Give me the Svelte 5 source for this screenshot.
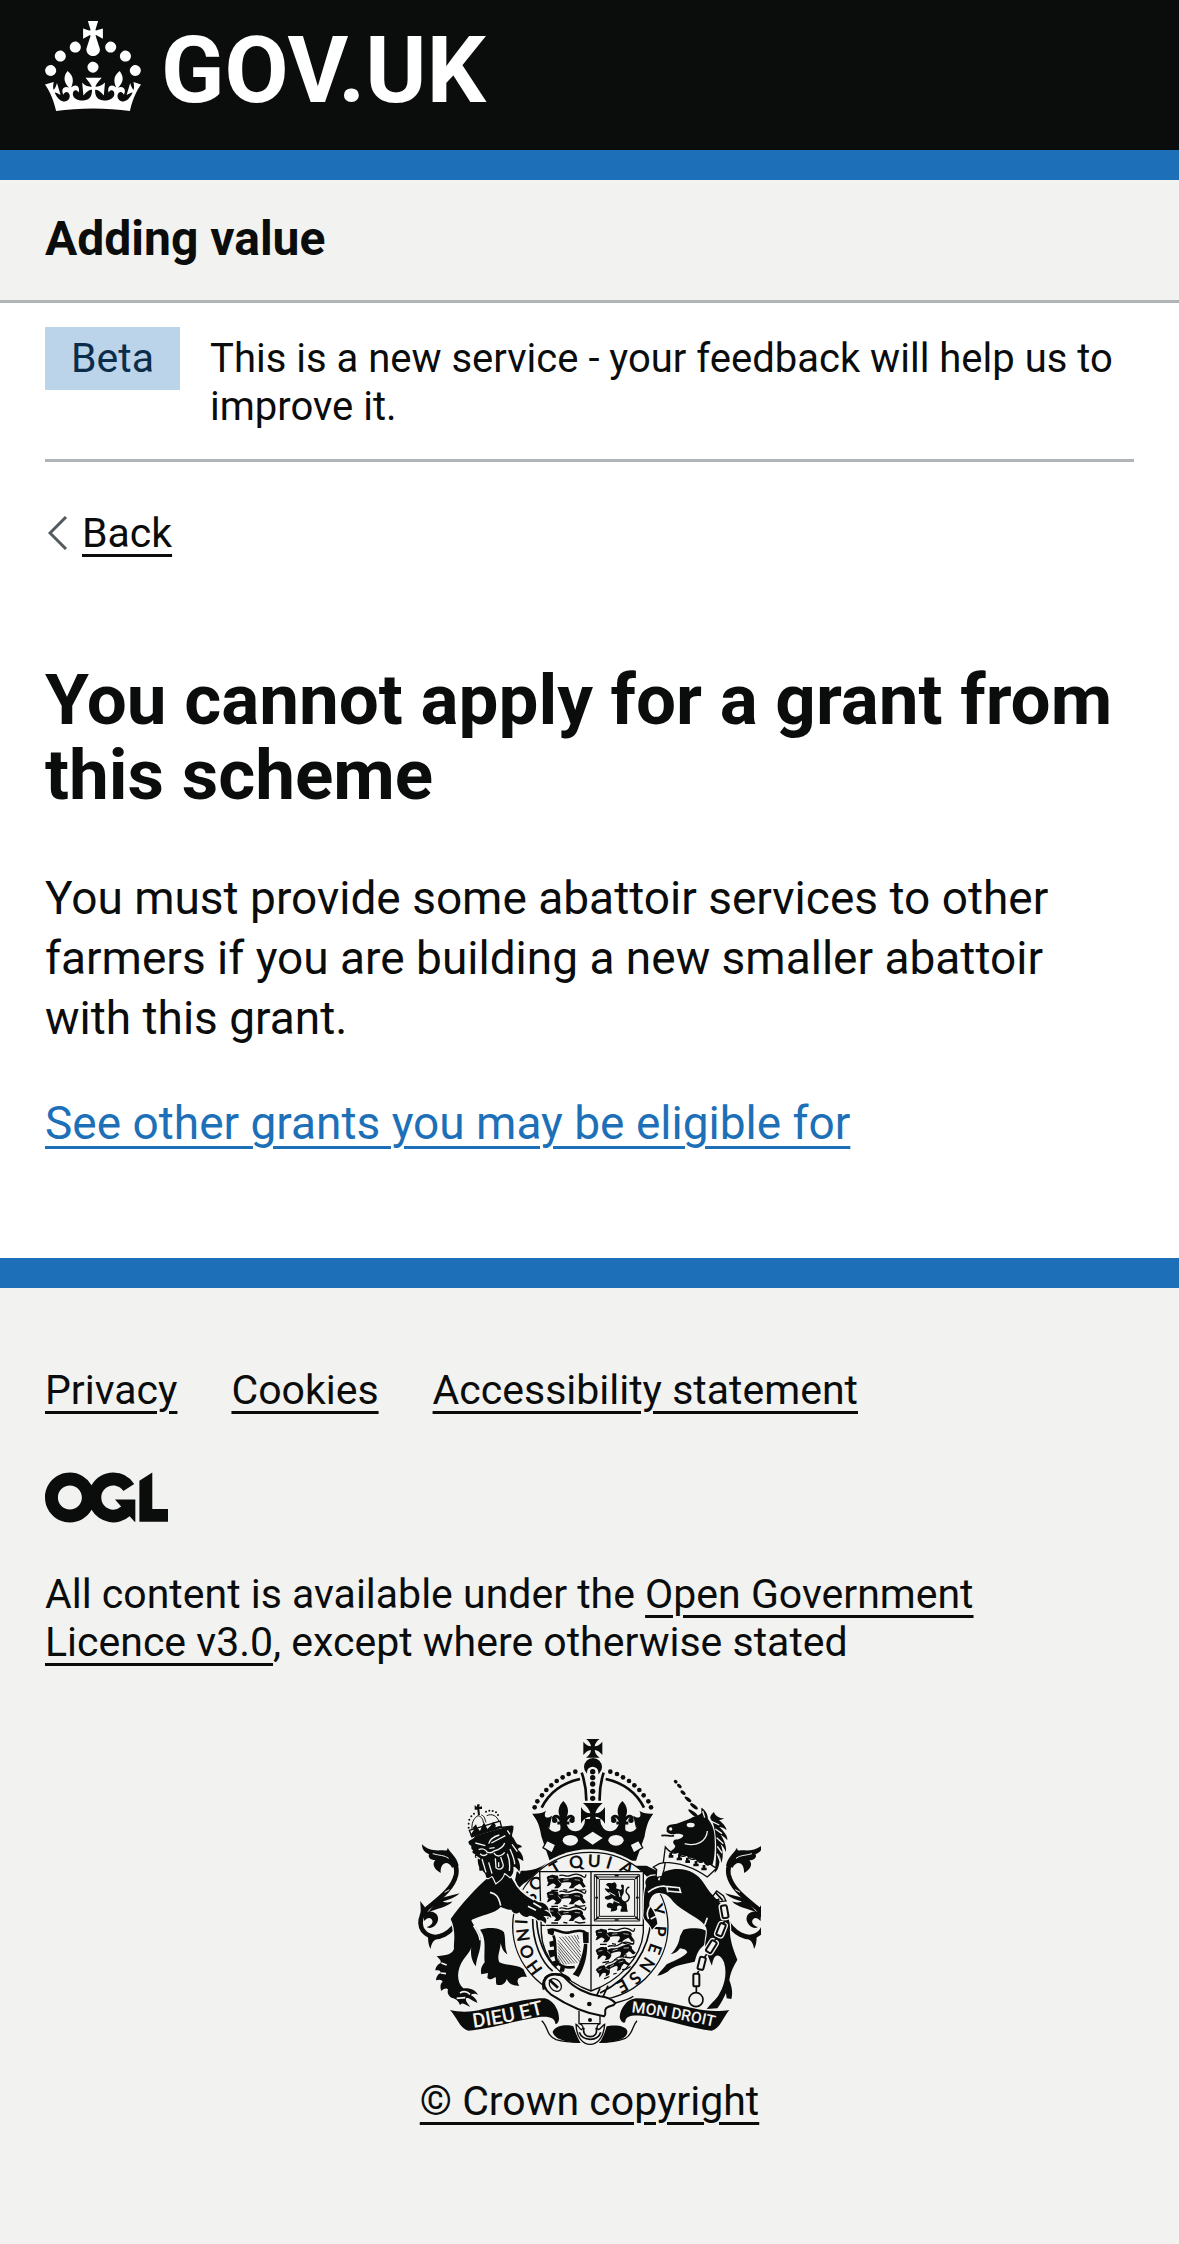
<script>
  const footerLinks = ['Privacy', 'Cookies', 'Accessibility statement'];

  const archPearls = [
    [404, 265], [412, 247], [426, 229], [439, 213], [454, 199],
    [470, 186], [488, 175], [506, 165], [526, 158],
  ];
  const centrePearls = [158, 176, 195, 217, 238];
  const smallPearls = [
    [206, 326], [206, 314], [208, 302], [214, 292], [222, 284],
    [258, 278], [268, 275], [278, 276], [288, 280], [294, 288],
  ];
  const hornTwists = [
    [827, 188, 6], [838, 201, 8], [849, 221, 9], [864, 241, 12], [882, 262, 14], [880, 283, 19],
  ];
  const chainLinks = [
    [974, 578, 80], [963, 632, 112], [934, 683, 122], [905, 733, 104], [889, 783, 90],
  ];
  const harpStrings = [0, 1, 2, 3, 4, 5, 6];

  // Motto letters stand upright from the centre of the garter.
  const centre = [571, 622];
  const motto = [
    ['H', 402, 746], ['O', 380, 698], ['N', 368, 648], ['I', 363, 608],
    ['S', 390, 533], ['O', 408, 492], ['T', 466, 446],
    ['Q', 528, 428], ['U', 583, 425], ['I', 628, 430], ['A', 682, 446],
    ['Y', 774, 572], ['P', 780, 636], ['E', 766, 690], ['N', 742, 738], ['S', 706, 778], ['E', 668, 802],
  ].map(([letter, x, y]) => ({
    letter, x, y,
    turn: Math.round((Math.atan2(x - centre[0], centre[1] - y) * 180) / Math.PI),
  }));
</script>

<header class="masthead">
  <div class="container">
    <a class="logo" href="#home" aria-label="GOV.UK">
      <svg class="crown" viewBox="0 0 32 30" aria-hidden="true">
        <path d="M22.6 10.4c-1 .4-2-.1-2.4-1-.4-.9.1-2 1-2.4.9-.4 2 .1 2.4 1s-.1 2-1 2.4m-5.9 6.7c-.9.4-2-.1-2.4-1-.4-.9.1-2 1-2.4.9-.4 2 .1 2.4 1s-.1 2-1 2.4m10.8-3.7c-1 .4-2-.1-2.4-1-.4-.9.1-2 1-2.4.9-.4 2 .1 2.4 1s0 2-1 2.4m3.3 4.8c-1 .4-2-.1-2.4-1-.4-.9.1-2 1-2.4.9-.4 2 .1 2.4 1s-.1 2-1 2.4M17 4.7l2.3 1.2V2.5l-2.3.7-.2-.2.9-3h-3.4l.9 3-.2.2c-.1.1-2.3-.7-2.3-.7v3.4L15 4.7c.1.1.1.2.2.2l-1.3 4c-.1.2-.1.4-.1.6 0 1.1.8 2 1.9 2.2h.7c1-.2 1.9-1.1 1.9-2.1 0-.2 0-.4-.1-.6l-1.3-4c-.1-.2 0-.2.1-.3m-7.6 5.7c.9.4 2-.1 2.4-1 .4-.9-.1-2-1-2.4-.9-.4-2 .1-2.4 1s0 2 1 2.4m-5 3c.9.4 2-.1 2.4-1 .4-.9-.1-2-1-2.4-.9-.4-2 .1-2.4 1s.1 2 1 2.4m-3.2 4.8c.9.4 2-.1 2.4-1 .4-.9-.1-2-1-2.4-.9-.4-2 .1-2.4 1s0 2 1 2.4m14.8 11c4.4 0 8.6.3 12.3.8 1.1-4.5 2.4-7 3.7-8.8l-2.5-.9c.2 1.3.3 1.9 0 2.7-.4-.4-.8-1.1-1.1-2.3l-1.2 4c.7-.5 1.3-.8 2-.9-1.1 2.5-2.6 3.1-3.5 3-1.1-.2-1.7-1.2-1.5-2.1.3-1.2 1.5-1.5 2.1-.1 1.1-2.3-.8-3-2-2.3 1.9-1.9 2.1-3.5.6-5.6-2.1 1.6-2.1 3.2-1.2 5.5-1.2-1.4-3.2-.6-2.5 1.6.9-1.4 2.1-.5 1.9.8-.2 1.1-1.7 2.1-3.5 1.9-2.7-.2-2.9-2.1-2.9-3.6.7-.1 1.9.5 2.9 1.9l.4-4.3c-1.1 1.1-2.1 1.4-3.2 1.4.4-1.2 2.1-3 2.1-3h-5.4s1.7 1.9 2.1 3c-1.1 0-2.1-.2-3.2-1.4l.4 4.3c1-1.4 2.2-2 2.9-1.9-.1 1.5-.2 3.4-2.9 3.6-1.9.2-3.4-.8-3.5-1.9-.2-1.3 1-2.2 1.9-.8.7-2.3-1.2-3-2.5-1.6.9-2.2.9-3.9-1.2-5.5-1.5 2-1.3 3.7.6 5.6-1.2-.7-3.1 0-2 2.3.6-1.4 1.8-1.1 2.1.1.2.9-.3 1.9-1.5 2.1-.9.2-2.4-.5-3.5-3 .6 0 1.2.3 2 .9l-1.2-4c-.3 1.1-.7 1.9-1.1 2.3-.3-.8-.2-1.4 0-2.7l-2.9.9C1.3 23 2.6 25.5 3.7 30c3.7-.5 7.9-.8 12.3-.8" />
      </svg>
      <span class="wordmark">GOV.UK</span>
    </a>
  </div>
</header>

<div class="service">
  <div class="container"><span>Adding value</span></div>
</div>

<div class="container">
  <div class="phase">
    <strong class="tag">Beta</strong>
    <span>This is a new service - your feedback will help us to improve it.</span>
  </div>

  <a class="back" href="#back">
    <svg viewBox="0 0 20 34" aria-hidden="true"><path d="M18 1 2 17l16 16" /></svg>
    <span class="underlined">Back</span>
  </a>

  <main>
    <h1>You cannot apply for a grant from this scheme</h1>
    <p>You must provide some abattoir services to other farmers if you are building a new smaller abattoir with this grant.</p>
    <p><a class="underlined action" href="#grants">See other grants you may be eligible for</a></p>
  </main>
</div>

<footer>
  <div class="container">
    <ul>
      {#each footerLinks as label}
        <li><a class="underlined" href="#{label.split(' ')[0].toLowerCase()}">{label}</a></li>
      {/each}
    </ul>

    <svg class="ogl" viewBox="0 0 483.2 195.7" role="img" aria-label="Open Government Licence">
      <path d="M421.5 142.8V.1l-50.7 32.3v161.1h112.4v-50.7zm-122.3-9.6A47.12 47.12 0 0 1 221 97.8c0-26 21.1-47.1 47.1-47.1 16.7 0 31.4 8.7 39.7 21.8l42.7-27.2A97.63 97.63 0 0 0 268.1 0c-36.5 0-68.3 20.1-85.1 49.7A98 98 0 0 0 97.8 0C43.9 0 0 43.9 0 97.8s43.9 97.8 97.8 97.8c36.5 0 68.3-20.1 85.1-49.7a97.76 97.76 0 0 0 149.6 25.4l19.4 22.2h3v-87.8h-80l24.3 27.5zM97.8 145c-26 0-47.1-21.1-47.1-47.1s21.1-47.1 47.1-47.1 47.1 21.1 47.1 47.1S123.8 145 97.8 145" />
    </svg>

    <p class="licence">
      All content is available under the <a class="underlined" href="#licence">Open Government Licence v3.0</a>, except where otherwise stated
    </p>

    <a class="copyright" href="#copyright">
      <svg class="crest" viewBox="54 60 1029 918" aria-hidden="true">
        <defs>
          <path id="motto-left" d="M221 926Q330 912 450 880" />
          <path id="motto-right" d="M694 880Q820 894 970 930" />
          <g id="fleur">
            <path class="ink" d="M490 246C506 262 508 280 498 298L499 336H481L482 298C472 280 474 262 490 246Z" />
            <path class="line w9" d="M486 320C484 292 464 284 459 300M494 320C496 292 516 284 521 300" />
            <circle class="ink" cx="464" cy="304" r="8" /><circle class="ink" cx="516" cy="304" r="8" />
            <path class="line w9" d="M472 312H508" />
          </g>
          <g id="passant">
            <path class="ink" d="M0 6C4-2 10 2 14-2C20-4 26 0 34 0L36 10C46 4 52 8 62 8C76 8 82 2 96 4C106 5 112 12 108 18C112 22 114 30 118 32L110 36C104 32 104 26 98 24C92 28 84 30 80 38L66 38L70 32C74 28 76 22 70 20C60 20 52 18 44 22C46 28 40 34 34 38L22 38L28 30C26 26 22 22 16 24C10 26 8 32 0 32C4 28 2 24 6 20C0 18 4 12 0 6Z" />
            <path class="line w4" d="M38 0C50-6 58 6 70 0S92-8 104 0S116 6 118-4M14 44L34 44M50 42L62 44M84 40L98 44L116 42" />
            <path class="cut w2" d="M8 8H20M34 12L42 22M50 14L66 12M84 12L100 14" />
          </g>
          <g id="tail">
            <path class="line w14" d="M180 596C152 648 112 662 88 650C54 634 54 596 82 568C112 542 158 512 168 468C174 436 156 414 128 412" />
            <path class="ink" d="M66 376C80 392 104 396 124 394C136 394 142 398 143 386C152 404 170 412 176 440L156 446C144 422 120 430 122 462C100 450 96 434 106 424C90 424 82 412 88 406C72 400 66 390 66 376Z" />
            <path class="ink" d="M179 523C160 540 140 544 128 548C142 552 150 550 158 547C142 566 110 568 82 582L120 538ZM61 545C68 560 80 562 78 580L58 592C66 575 60 560 61 545ZM84 650C84 668 86 680 92 690C94 674 100 664 114 658Z" />
            <path class="ink" d="M72 582C100 568 122 588 112 610C104 626 90 630 80 624C96 620 102 608 94 600C88 594 82 596 72 606Z" />
            <path class="cut w3" d="M98 404C118 410 134 408 146 418M134 520L148 512" />
          </g>
        </defs>

        <!-- Imperial crown -->
        <path class="ink" d="M558 60H599C590 66 585 74 584 82C593 81 601 76 607 68V108C601 100 593 94 584 93C585 102 590 110 599 116H558C567 110 572 102 573 93C564 94 556 100 550 108V68C556 76 564 81 573 82C572 74 567 66 558 60Z" />
        <circle class="ink" cx="579" cy="144" r="27" />
        <path class="paper" d="M561 250V160A17 17 0 0 1 595 160V250Z" />
        <path class="line w8" d="M545 161Q559 200 559 245M611 161Q598 200 599 245" />
        {#each centrePearls as y}<circle class="ink" cx="578" cy={y} r="8" />{/each}
        {#each archPearls as [x, y]}
          <circle class="ink" cx={x} cy={y} r="7" />
          <circle class="ink" cx={1157 - x} cy={y} r="7" />
        {/each}
        <path class="line w8" d="M425 266C446 224 486 192 540 180M732 266C711 224 671 192 617 180" />
        <path class="ink" d="M397 284L440 300H717L760 284C745 300 737 330 734 352L708 425H449L424 352C420 325 412 300 397 284Z" />
        <ellipse class="paper" cx="466" cy="308" rx="25" ry="31" /><ellipse class="paper" cx="526" cy="304" rx="29" ry="33" />
        <ellipse class="paper" cx="690" cy="308" rx="25" ry="31" /><ellipse class="paper" cx="630" cy="304" rx="29" ry="33" />
        <path class="ink" d="M397 284C416 285 430 281 438 275C430 290 436 304 456 290L448 328C440 316 430 318 428 330ZM759 284C740 285 726 281 718 275C726 290 720 304 700 290L708 328C716 316 726 318 728 330Z" />
        <use href="#fleur" /><use href="#fleur" x="177" />
        <path class="ink" d="M549 252H608C597 262 588 272 586 283C597 283 607 276 615 264V314C607 300 597 294 586 293C588 302 594 315 602 324H556C566 312 570 302 571 293C560 294 550 300 543 314V264C550 276 560 283 571 283C569 272 560 262 549 252Z" />
        <path class="paper" d="M578 338L608 357L578 377L549 357Z" />
        <ellipse class="paper" cx="511" cy="364" rx="23" ry="16" /><ellipse class="paper" cx="648" cy="364" rx="23" ry="16" />
        <path class="gem" d="M441 364L467 377L456 402L429 386ZM716 364L690 377L701 402L728 386Z" />

        <!-- Garter -->
        <ellipse class="paper" cx="571" cy="622" rx="240" ry="231" />
        <path class="ink" d="M350 458C370 452 400 462 440 432L380 488L340 510ZM740 440L800 470L740 520L700 440Z" />
        <ellipse class="band" cx="571" cy="622" rx="233" ry="222" />
        <g class="motto">
          {#each motto as { letter, x, y, turn }}
            <text {x} {y} transform="rotate({turn} {x} {y})">{letter}</text>
          {/each}
        </g>
        <path class="line w5" d="M398 600C398 670 424 730 458 756M410 600C412 660 434 716 470 748M752 600C750 690 690 780 600 822M600 808L586 838M624 800L606 840" />

        <!-- Shield -->
        <path class="field" d="M419 458H730V640C724 720 650 790 573 816C496 790 426 720 424 640Z" />
        <path class="line w4" d="M573 458V816M422 619H730" />
        <use href="#passant" x="440" y="470" /><use href="#passant" x="440" y="518" /><use href="#passant" x="440" y="568" />
        <use href="#passant" transform="translate(586 632)" />
        <use href="#passant" transform="translate(586 690) rotate(-10)" />
        <use href="#passant" transform="translate(586 750) rotate(-24) scale(.86)" />
        <path class="line w3" d="M583 467H719V606H583ZM590 474H712V599H590ZM598 481H704V592H598Z" />
        <path class="line w5" d="M586 470L596 480M716 470L706 480M586 603L596 593M716 603L706 593M644 470H656M644 603H656M586 536H594M708 536H716" />
        <path class="ink" d="M618 496C626 488 634 496 642 490C650 492 652 500 648 508C656 510 664 516 666 508C660 500 664 492 672 500C670 512 674 520 668 528C662 536 666 544 676 548C684 556 678 566 684 578H662C660 570 668 568 664 562C656 556 648 562 652 570C648 578 640 576 632 578L634 568C628 566 622 568 620 560C622 550 630 550 638 554C644 548 642 540 636 538C628 544 618 544 614 536C618 528 628 532 632 526C624 520 616 516 614 508L628 510C628 502 620 502 618 496Z" />
        <path class="cut w3" d="M628 520L646 530M656 516L660 534M640 544L658 552" />
        <path class="line w4" d="M668 552C690 548 692 532 682 524C674 518 680 506 688 504" />
        <path class="line w8" d="M446 634C470 624 480 648 510 640C530 634 550 632 560 644M460 650C470 668 462 700 470 724C476 742 500 748 524 744" />
        <path class="ink" d="M442 630L464 630L460 650L444 644ZM548 640H566V672H550ZM552 674H562C562 706 556 740 536 774L518 766C536 746 548 710 552 674ZM448 668L464 664L464 682L450 684ZM444 694L466 692V710L450 716ZM456 728L474 722L480 736L466 744ZM482 742L496 742L492 758L478 758Z" />
        {#each harpStrings as i}
          <path class="line w2" d="M{478 + i * 9} {654 - i}L{548 - i * 2} {738 - i * 13}M474 {664 + i * 9}L{532 - i * 8} {732 + i}" />
        {/each}

        <!-- Lion -->
        <use href="#tail" />
        <path class="ink halo" d="M240 632C266 624 300 626 312 640C318 662 312 682 322 706C312 700 306 690 302 672C300 700 290 712 298 730C320 740 350 736 370 750L381 774C360 770 344 780 358 800C340 800 328 796 320 780C316 796 304 800 290 797C286 790 290 780 286 774C278 780 270 784 262 776L264 762L244 766C240 750 246 740 254 730C250 700 262 660 240 632Z" />
        <path class="ink halo" d="M262 478C230 505 180 560 152 600C170 636 160 672 162 690C156 704 146 708 110 712C118 720 124 724 122 732C112 736 106 746 106 754C116 754 122 754 122 762C112 766 108 776 108 784C118 780 126 782 128 788C120 794 120 806 124 816C134 806 142 808 144 812C140 822 148 836 160 838C166 840 176 846 180 858C186 850 190 852 210 864C208 856 196 850 198 838C206 834 214 844 232 852C230 840 222 834 212 828C220 822 228 824 234 828C228 814 212 806 190 808C168 790 170 750 190 722C206 702 212 694 214 684C210 712 218 730 228 742C228 718 244 694 242 662C240 636 220 622 214 604C240 588 286 584 302 564C316 568 322 574 334 572C338 582 348 588 358 580C364 592 380 598 388 590C396 590 408 596 414 604C424 602 432 606 436 614C442 604 438 596 430 592C440 590 450 592 454 598C454 586 446 578 432 574C440 570 446 572 446 580C448 560 430 548 416 550C380 530 348 502 334 476L300 450Z" />
        <path class="ink" d="M346 498L360 462C380 458 398 462 420 446L378 486L352 512Z" />
        <path class="cut w5" d="M270 520C288 524 296 532 302 560M342 482C352 510 380 530 402 542M218 604C232 600 230 616 222 622C234 640 240 652 240 664M384 562L408 574M400 552L424 566M180 822C190 816 200 816 210 826M170 838L196 836M124 732L140 738M122 762L138 764" />
        <path class="ink halo" d="M205 368C212 360 220 362 226 350L326 322L340 320C342 334 336 342 336 352C344 360 346 370 352 376C360 378 364 380 366 384C360 386 354 386 354 392C366 402 370 414 370 426C364 422 356 416 352 418C360 432 362 444 358 458C350 448 344 442 340 444C342 460 338 468 330 474C322 468 318 462 312 462C310 476 300 484 288 492C284 484 282 476 276 470C268 476 262 480 258 474C258 466 252 460 246 454C240 458 236 454 238 446C234 436 232 426 234 416C226 420 222 414 226 406C218 404 214 398 220 394C212 390 214 384 214 380C208 378 206 374 205 368Z" />
        <path class="cut w4" d="M226 372L256 380M274 372L316 350M236 392C250 386 256 392 262 400C270 402 276 404 282 396C296 392 310 386 314 372M266 374C270 360 284 352 298 348M262 404C254 412 246 410 240 404M282 402C290 416 306 412 314 400M286 418L288 446C300 456 314 446 308 432L302 414M296 430V444M246 420L258 460M330 390C338 408 344 424 344 436M322 404C330 424 330 440 328 456M336 376L352 398M228 412L240 420M266 430L276 464M322 334L330 346M268 388L284 386" />
        <path class="paper edge" d="M208 334L300 306L304 322C270 330 240 340 216 354Z" />
        <path class="line w5" d="M212 350C240 336 280 326 336 322" />
        <path class="ink" d="M224 258L230 264L232 256H239L238 264L246 262V270L238 270L240 288H234L232 272L224 272ZM214 344L222 332L218 326L228 316L232 326L240 336L246 322L252 310L258 322L262 330L272 320L280 308L288 320L284 326L298 322V330L216 354Z" />
        <path class="line w3" d="M216 330C214 306 226 294 234 290M296 306C292 292 276 282 260 290M234 290C246 292 250 304 250 312M244 288C256 292 254 302 258 310" />
        {#each smallPearls as [x, y]}<circle class="ink" cx={x} cy={y} r="3" />{/each}

        <!-- Unicorn -->
        <g transform="translate(1154 0) scale(-1 1)"><use href="#tail" /></g>
        <path class="ink halo" d="M850 632C880 624 912 628 926 640L930 660L900 690C892 700 888 714 884 728C856 734 830 738 812 750C800 762 786 768 772 770C780 756 792 748 800 736C816 728 850 716 862 700C858 690 850 690 840 688C832 700 822 704 812 706C830 690 838 668 840 652Z" />
        <path class="ink halo" d="M738 500C730 478 748 466 776 470C800 446 850 444 880 462C906 476 914 500 932 522C964 550 990 590 990 624C988 650 994 680 1012 722C1000 744 992 758 988 784C994 800 1000 820 994 840L980 838L978 822C970 838 964 852 952 868L920 870C930 856 944 846 954 832C970 806 984 770 972 730C964 708 942 694 936 740C924 716 922 700 916 694C912 660 930 640 914 618C890 590 850 580 820 548C800 522 790 524 778 522C760 520 746 540 748 560C758 570 770 590 772 614L756 632C748 610 732 606 730 590C734 560 728 530 738 500Z" />
        <path class="cut w5" d="M744 520C760 508 780 500 796 502L838 506L842 520L800 516M800 502L804 520M750 562C738 580 740 590 746 600M752 600L768 592M914 618L922 596M776 484L786 452" />
        <path class="paper edge" d="M778 434L796 430L792 452L786 472L768 476L770 452L760 444Z" />
        <path class="ink" d="M800 328C802 316 816 316 830 314L868 300C884 290 896 292 904 282L904 266C916 272 924 286 924 300C940 320 944 340 944 360C946 400 942 430 934 446L884 420L812 398C816 390 824 392 826 380C820 374 816 368 824 362C836 362 848 358 850 348C838 342 826 344 820 346C812 346 806 344 800 338Z" />
        <path class="line w5" d="M784 350C800 346 808 354 822 350" />
        <path class="cut w4" d="M854 374C890 384 920 366 922 336M908 276L914 296" />
        <circle class="paper" cx="812" cy="330" r="5" /><ellipse class="paper" cx="872" cy="318" rx="12" ry="7" />
        <path class="ink" d="M932 300C928 290 936 286 942 278C944 290 958 298 972 298C966 302 960 304 956 302C968 312 978 322 980 334C972 326 964 324 958 324C970 336 984 350 982 364C976 356 968 350 962 348C974 364 980 384 978 400C974 390 968 380 962 376C970 396 970 416 964 432C962 422 960 412 958 406C960 430 958 450 944 462C950 420 954 330 932 300Z" />
        <path class="cut w4" d="M936 308L958 318M946 330L966 344M950 356L970 374M952 382L966 402M952 404L960 426" />
        <path class="paper edge" d="M796 384L790 430C840 430 880 444 922 474L950 448C940 442 936 440 930 434C926 440 916 440 912 426C902 434 892 430 888 418C878 424 866 422 862 408C850 416 838 412 836 398C824 406 810 402 796 384Z" />
        <path class="line w8" d="M812 402V416M838 406V424M862 416V432M888 426V442M912 438V454M806 412H820M830 420H846M856 428H870M880 438H896M904 450H920" />
        {#each hornTwists as [x, y, r]}
          <ellipse class="ink" cx={x} cy={y} rx={r} ry="5" transform="rotate(38 {x} {y})" />
        {/each}

        <path class="paper edge" d="M938 532L950 516L970 530L978 546L960 548L946 540Z" />
        <path class="line w5" d="M946 520L968 544M940 548L958 540" />
        {#each chainLinks as [x, y, turn]}
          <g transform="rotate({turn} {x} {y})">
            <rect class="chain-gap" x={x - 19} y={y - 9} width="38" height="18" rx="5" />
            <rect class="link" x={x - 19} y={y - 9} width="38" height="18" rx="5" />
          </g>
        {/each}
        <path class="line w5" d="M976 606L968 614M952 656L944 664M920 706L914 714M896 756L892 764M889 804V822" />
        <circle class="line w5" cx="888" cy="842" r="21" />

        <!-- Garter strap -->
        <path class="paper edge thick" d="M436 776C452 760 486 762 500 782C520 804 560 826 600 832C620 834 636 842 646 852C640 864 632 856 618 868C610 880 622 886 612 892C560 884 500 858 452 826C434 812 428 794 436 776Z" />
        <path class="line w8" d="M432 812C424 782 442 764 472 766C488 766 502 772 510 784" />
        <ellipse class="paper edge" cx="466" cy="798" rx="16" ry="21" transform="rotate(-40 466 798)" />
        <path class="line w8" d="M448 782L474 806" />
        <circle class="ink" cx="516" cy="829" r="7" /><circle class="ink" cx="568" cy="855" r="7" /><circle class="ink" cx="570" cy="903" r="6" />
        <path class="line w4" d="M537 876V916M600 888V916M646 852C670 846 690 840 700 832" />

        <!-- Scrolls -->
        <path class="ink" d="M150 873C180 880 215 880 250 870C310 858 380 838 430 838C455 838 478 870 477 900C476 910 470 918 466 914C466 894 440 888 400 897C330 910 260 930 205 935C180 930 168 890 150 873Z" />
        <path class="ink" d="M988 873C960 878 920 878 880 868C830 858 760 838 708 838C680 840 660 870 659 895C662 908 672 916 676 908C676 890 700 886 740 892C810 905 880 930 935 935C960 930 972 890 988 873Z" />
        <path class="line w4" d="M425 905C444 920 438 950 468 962C490 968 510 970 540 970M711 905C696 920 700 946 676 958C650 968 620 970 598 970" />
        <path class="ink" d="M458 938C470 914 510 918 520 922C526 940 534 960 542 972C510 970 462 964 458 938ZM682 936C676 916 634 918 620 922C614 944 606 960 598 972C640 970 684 962 682 936Z" />
        <path class="paper edge" d="M528 916C530 996 610 996 614 916C606 920 604 928 596 932C588 928 590 918 600 914H538C550 918 552 928 544 932C536 928 536 920 528 916Z" />
        <path class="line w5" d="M552 926C542 962 600 962 588 926M538 940C548 968 594 968 602 940" />
        <g class="scroll-text">
          <text class="scroll-left"><textPath href="#motto-left">DIEU ET</textPath></text>
          <text class="scroll-right"><textPath href="#motto-right">MON DROIT</textPath></text>
        </g>
      </svg>
      <span class="underlined">© Crown copyright</span>
    </a>
  </div>
</footer>

<style>
  :global(body) {
    background: #f2f2f0;
    color: #0b0c0c;
    font-family: Roboto, 'Liberation Sans', sans-serif;
    font-size: 41px;
    line-height: 48px;
  }
  :global(#app) { background: #fff; }

  .container { padding: 0 45px; }
  a { color: inherit; text-decoration: none; }
  .underlined {
    text-decoration: underline;
    text-decoration-thickness: 3px;
    text-underline-offset: 7px;
  }

  .masthead {
    background: #0b0c0c;
    border-bottom: 30px solid #1d70b8;
    color: #fff;
  }
  .logo { display: flex; gap: 20px; height: 150px; align-items: flex-start; }
  .crown { width: 96px; height: 90px; margin-top: 21px; fill: #fff; }
  .wordmark { font-size: 93px; font-weight: 700; line-height: 142px; }

  .service {
    background: #f2f2f0;
    border-bottom: 3px solid #b1b4b6;
    font-size: 48px;
    font-weight: 700;
    line-height: 118px;
    padding-bottom: 2px;
  }

  .phase {
    display: flex;
    align-items: flex-start;
    gap: 30px;
    padding: 24px 0 18px;
    border-bottom: 3px solid #b1b4b6;
  }
  .phase span { padding: 8px 0 10px; font-size: 40px; }
  .tag {
    flex: none;
    padding: 7px 26px 8px;
    background: #bbd4ea;
    color: #0c2d4a;
    font-weight: 400;
  }

  .back { display: inline-flex; align-items: center; gap: 14px; margin-top: 47px; }
  .back svg { width: 20px; height: 34px; margin-left: 3px; fill: none; stroke: #505a5f; stroke-width: 3; }

  main { padding: 102px 0 105px; }
  h1 { margin: 0 0 56px; font-size: 71px; line-height: 75px; }
  p { margin: 0 0 45px; }
  main p { font-size: 46px; line-height: 60px; }
  main p:last-child { margin: 0; }
  .action { color: #1d70b8; }

  footer { padding: 78px 0 105px; background: #f2f2f0; border-top: 30px solid #1d70b8; }
  ul { display: flex; flex-wrap: wrap; gap: 18px 54px; margin: 0 0 58px; padding: 0; list-style: none; }
  .ogl { display: block; width: 123px; height: 51px; margin-bottom: 47px; fill: #0b0c0c; }
  .licence { max-width: 980px; margin-bottom: 73px; }
  .copyright { display: flex; flex-direction: column; align-items: center; gap: 32px; }
  .crest { width: 343px; height: 306px; overflow: hidden; }

  .ink { fill: #0b0c0c; }
  .paper { fill: #f2f2f0; }
  .halo { stroke: #f2f2f0; stroke-width: 7; paint-order: stroke; }
  .line, .link { fill: none; stroke: #0b0c0c; }
  .cut { fill: none; stroke: #f2f2f0; }
  .edge, .field, .band, .gem { stroke: #0b0c0c; stroke-width: 4; fill: #f2f2f0; }
  .thick { stroke-width: 6; }
  .chain-gap { fill: #f2f2f0; stroke: #f2f2f0; stroke-width: 14; }
  .link { stroke-width: 6; }
  .w2 { stroke-width: 2; }
  .w3 { stroke-width: 3; }
  .w4 { stroke-width: 4; }
  .w5 { stroke-width: 5; }
  .w8 { stroke-width: 8; }
  .w9 { stroke-width: 9; }
  .w14 { stroke-width: 14; }
  .motto {
    font-family: Lato, sans-serif;
    font-size: 52px;
    font-weight: 700;
    fill: #0b0c0c;
    text-anchor: middle;
    dominant-baseline: central;
  }
  .scroll-text { font-weight: 500; fill: #f2f2f0; }
  .scroll-left { font-size: 60px; }
  .scroll-right { font-size: 47px; }
</style>
